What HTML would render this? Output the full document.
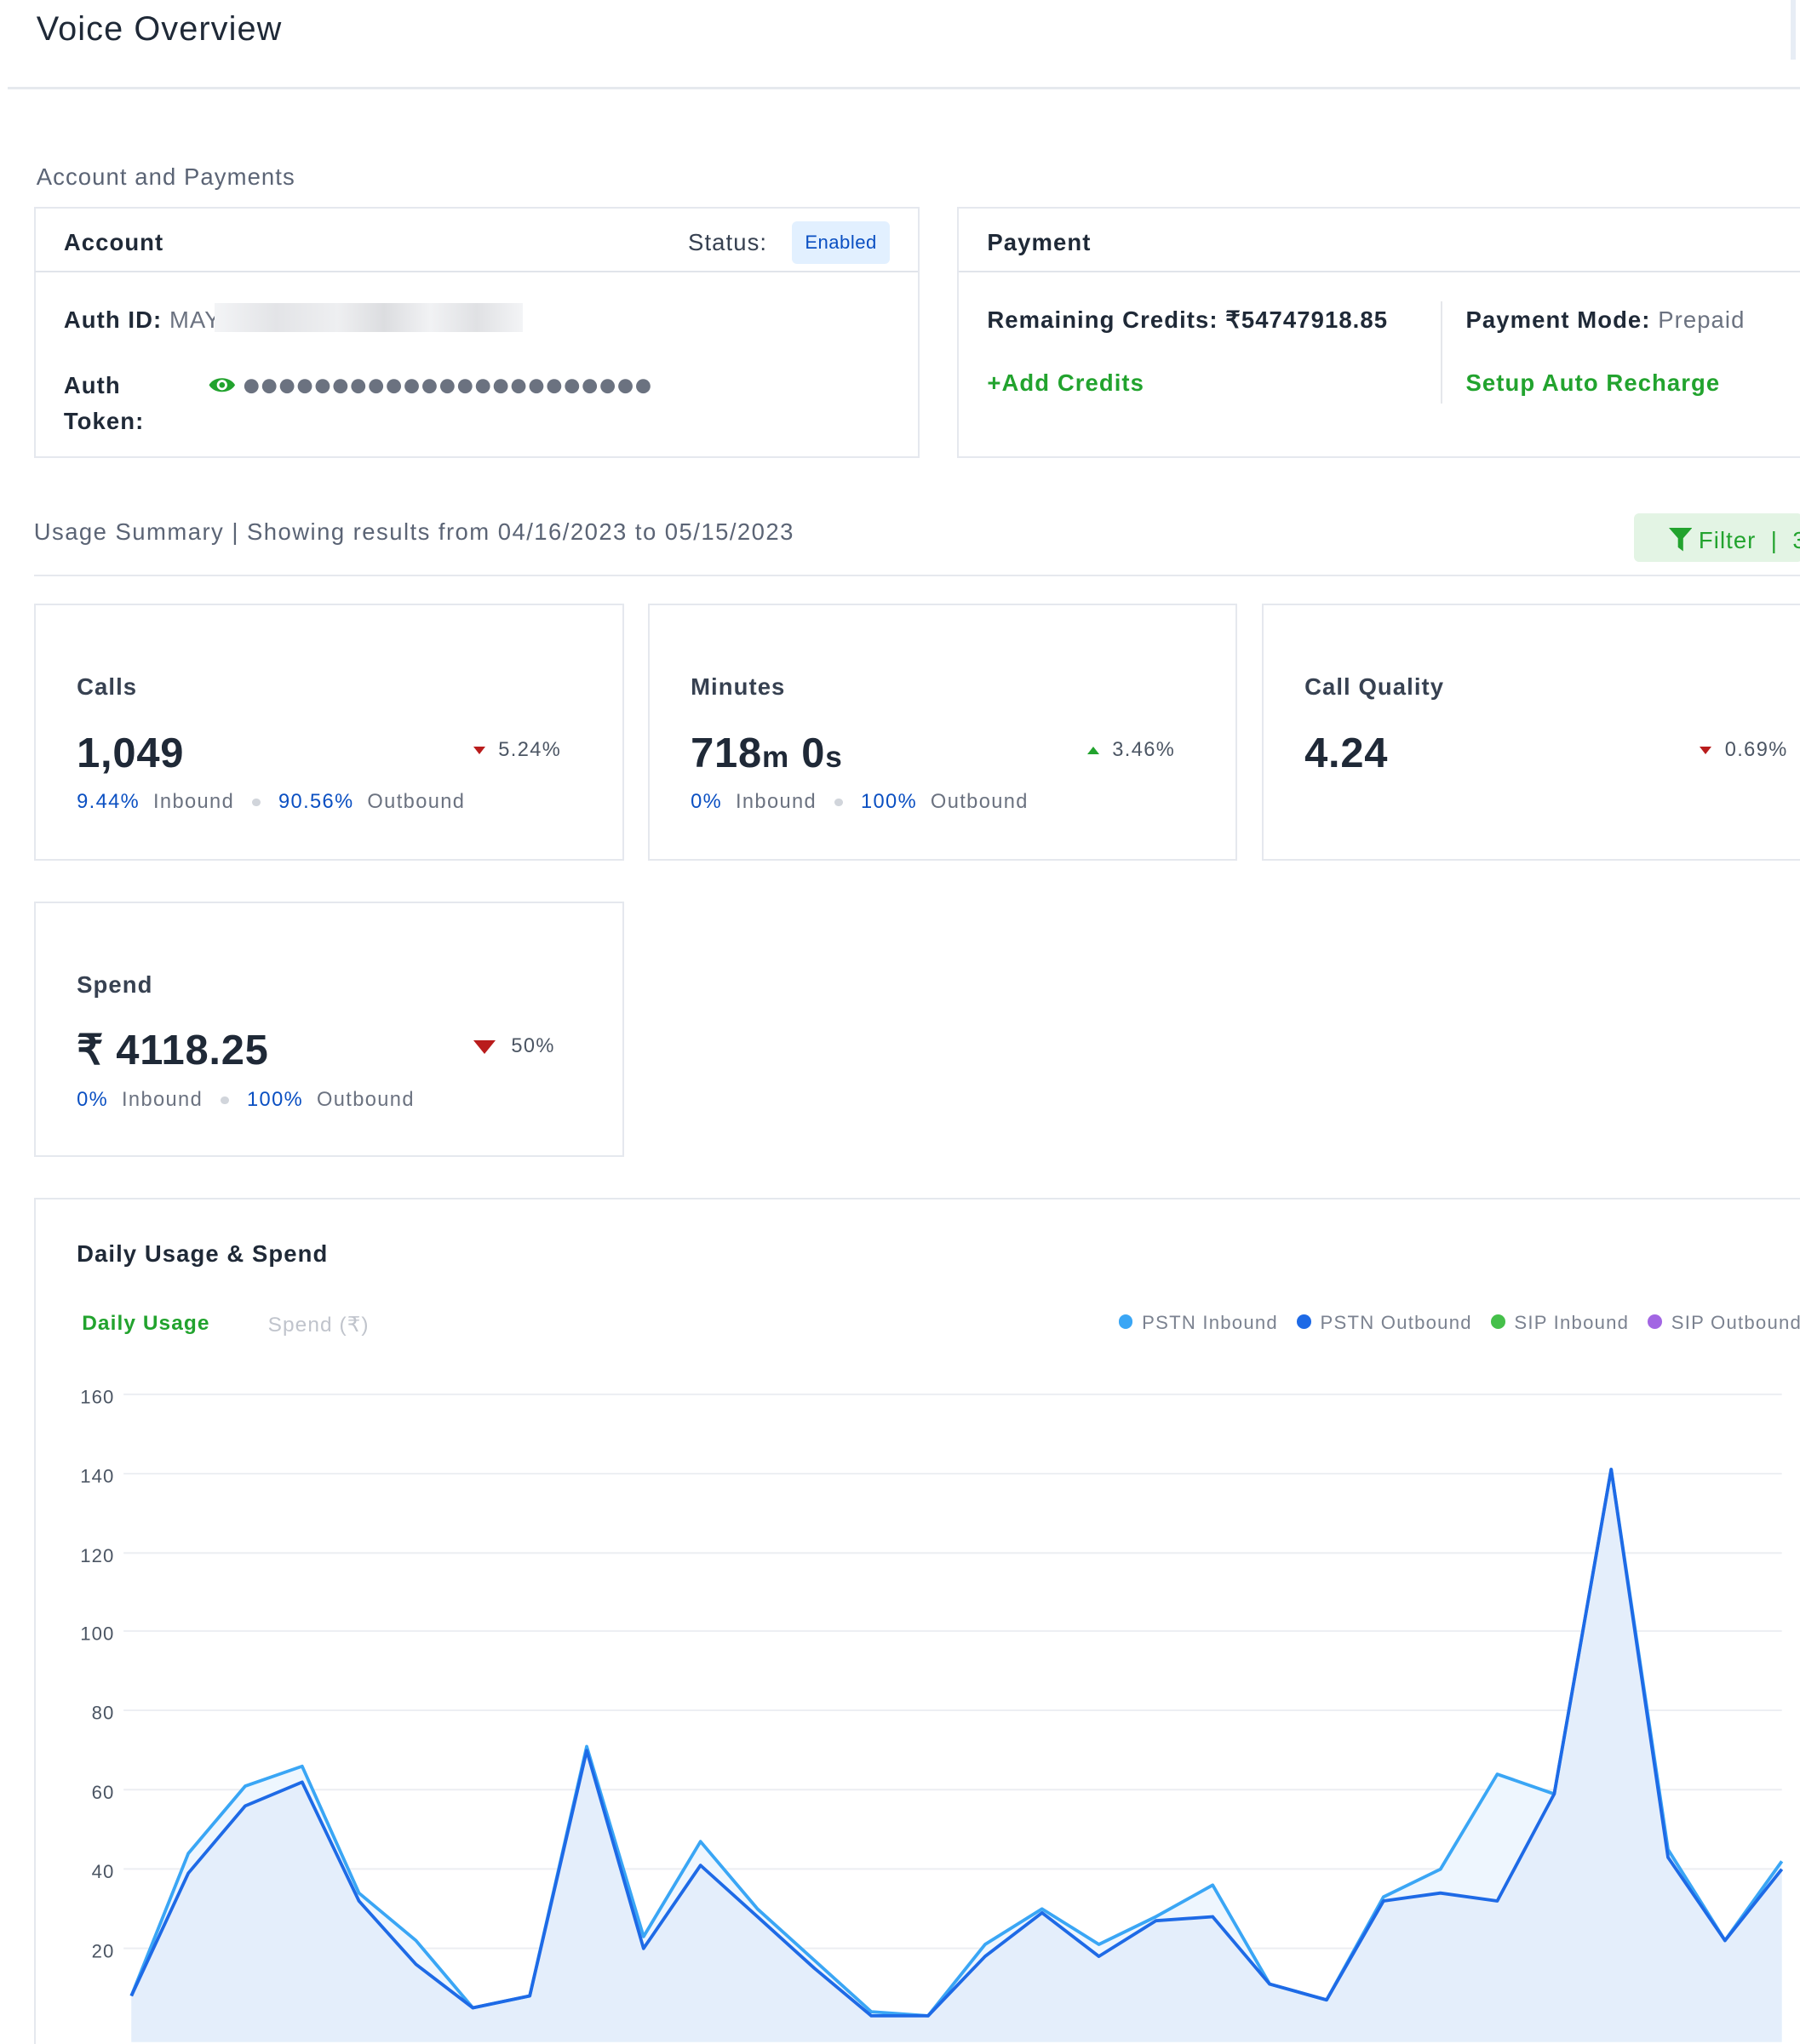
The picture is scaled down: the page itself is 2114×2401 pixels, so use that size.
<!DOCTYPE html>
<html><head><meta charset="utf-8"><style>
html,body{margin:0;padding:0;background:#fff;overflow:hidden}
#w{zoom:1.5275;position:relative;width:1384px;height:1572px;font-family:"Liberation Sans",sans-serif;color:#1f2937;letter-spacing:.7px}
.a{position:absolute;white-space:nowrap}
.box{position:absolute;border:1.5px solid #e5e8ee;background:#fff;box-sizing:border-box}
.g{color:#6b7280}.b{color:#0a4fc2}.gr{color:#22a32e}
.t{font-size:18px;font-weight:600;color:#374151}
.big{font-size:32px;font-weight:700;color:#1f2937;letter-spacing:.5px}
.s{font-size:15.5px;letter-spacing:.9px}
.dot{display:inline-block;width:6px;height:6px;border-radius:50%;background:#d1d5db;vertical-align:middle;margin:0 14px}
.tri{display:inline-block;width:0;height:0;border-left:5px solid transparent;border-right:5px solid transparent;border-top:6px solid #b91c1c;margin-right:10px;vertical-align:middle}
.up{border-top:none;border-bottom:6px solid #22a32e}
</style></head><body><div id="w">
<div class="a" style="left:28px;top:8px;font-size:26px;color:#1f2937">Voice Overview</div>
<div class="a" style="left:1377px;top:0;width:4px;height:46px;background:#e7edf5"></div>
<div class="a" style="left:6px;top:67px;width:1378px;height:1.5px;background:#e6e9ee"></div>
<div class="a g" style="left:28px;top:126px;font-size:18px;color:#5b6475">Account and Payments</div>

<div class="box" style="left:26px;top:159px;width:681px;height:193px"></div>
<div class="a" style="left:27px;top:208px;width:679px;height:1.5px;background:#e1e4ea"></div>
<div class="a t" style="left:49px;top:176px;color:#1f2937">Account</div>
<div class="a t" style="left:529px;top:176px;font-weight:400;color:#374151">Status:</div>
<div class="a" style="left:609px;top:170px;width:75px;height:33px;background:#e2f0ff;border-radius:4px;color:#0a4fc2;font-size:14.5px;line-height:33px;text-align:center;letter-spacing:.3px">Enabled</div>
<div class="a t" style="left:49px;top:236px"><span style="color:#1f2937">Auth ID:</span> <span class="g" style="font-weight:400">MAY</span></div>
<div class="a" style="left:165px;top:233px;width:237px;height:22px;background:linear-gradient(90deg,#f3f4f6,#e3e4e7 20%,#eeeff1 40%,#dcdde0 55%,#f1f2f4 70%,#e0e1e4 85%,#f3f4f6)"></div>
<div class="a t" style="left:49px;top:283px;line-height:27px;color:#1f2937">Auth<br>Token:</div>
<svg class="a" style="left:160px;top:288px" width="22" height="16" viewBox="0 0 22 16"><path d="M1 8C5 1 17 1 21 8C17 15 5 15 1 8Z" fill="#22a32e"/><circle cx="11" cy="8" r="4" fill="#fff"/><circle cx="11" cy="8" r="2.2" fill="#22a32e"/></svg>
<svg class="a" style="left:187px;top:290px" width="320" height="14" viewBox="0 0 320 14"><g fill="#6b7280">
<circle cx="6" cy="7" r="5.5"/><circle cx="19.7" cy="7" r="5.5"/><circle cx="33.4" cy="7" r="5.5"/><circle cx="47.1" cy="7" r="5.5"/><circle cx="60.8" cy="7" r="5.5"/><circle cx="74.5" cy="7" r="5.5"/><circle cx="88.2" cy="7" r="5.5"/><circle cx="101.9" cy="7" r="5.5"/><circle cx="115.6" cy="7" r="5.5"/><circle cx="129.3" cy="7" r="5.5"/><circle cx="143" cy="7" r="5.5"/><circle cx="156.7" cy="7" r="5.5"/><circle cx="170.4" cy="7" r="5.5"/><circle cx="184.1" cy="7" r="5.5"/><circle cx="197.8" cy="7" r="5.5"/><circle cx="211.5" cy="7" r="5.5"/><circle cx="225.2" cy="7" r="5.5"/><circle cx="238.9" cy="7" r="5.5"/><circle cx="252.6" cy="7" r="5.5"/><circle cx="266.3" cy="7" r="5.5"/><circle cx="280" cy="7" r="5.5"/><circle cx="293.7" cy="7" r="5.5"/><circle cx="307.4" cy="7" r="5.5"/></g></svg>

<div class="box" style="left:736px;top:159px;width:660px;height:193px"></div>
<div class="a" style="left:737px;top:208px;width:647px;height:1.5px;background:#e1e4ea"></div>
<div class="a t" style="left:759px;top:176px;color:#1f2937">Payment</div>
<div class="a t" style="left:759px;top:236px;color:#1f2937">Remaining Credits: ₹54747918.85</div>
<div class="a" style="left:1108px;top:232px;width:1px;height:78px;background:#e5e7eb"></div>
<div class="a t" style="left:1127px;top:236px;color:#1f2937">Payment Mode: <span class="g" style="font-weight:400">Prepaid</span></div>
<div class="a t gr" style="left:759px;top:284px;color:#22a32e">+Add Credits</div>
<div class="a t gr" style="left:1127px;top:284px;color:#22a32e">Setup Auto Recharge</div>

<div class="a" style="left:26px;top:399px;font-size:18px;color:#5b6475;letter-spacing:.95px">Usage Summary | Showing results from 04/16/2023 to 05/15/2023</div>
<div class="a" style="left:1256px;top:395px;width:130px;height:37px;background:#e3f4e4;border-radius:4px"></div>
<svg class="a" style="left:1283px;top:406px" width="18" height="18" viewBox="0 0 18 18"><path d="M0 0H18L11 8V18L7 15V8Z" fill="#22a32e"/></svg>
<div class="a gr" style="left:1306px;top:405px;font-size:18px">Filter &nbsp;| &nbsp;3</div>
<div class="a" style="left:26px;top:442px;width:1358px;height:1.5px;background:#e6e9ee"></div>

<div class="box" style="left:26px;top:464px;width:454px;height:198px"></div>
<div class="a t" style="left:59px;top:518px">Calls</div>
<div class="a big" style="left:59px;top:561px">1,049</div>
<div class="a s" style="left:364px;top:568px;color:#4b5563"><span class="tri"></span>5.24%</div>
<div class="a s" style="left:59px;top:608px"><span class="b">9.44%</span>&nbsp; <span class="g">Inbound</span><span class="dot"></span><span class="b">90.56%</span>&nbsp; <span class="g">Outbound</span></div>

<div class="box" style="left:498px;top:464px;width:453px;height:198px"></div>
<div class="a t" style="left:531px;top:518px">Minutes</div>
<div class="a big" style="left:531px;top:561px">718<span style="font-size:23px">m</span> 0<span style="font-size:23px">s</span></div>
<div class="a s" style="left:836px;top:568px;color:#4b5563"><span class="tri up"></span>3.46%</div>
<div class="a s" style="left:531px;top:608px"><span class="b">0%</span>&nbsp; <span class="g">Inbound</span><span class="dot"></span><span class="b">100%</span>&nbsp; <span class="g">Outbound</span></div>

<div class="box" style="left:970px;top:464px;width:430px;height:198px"></div>
<div class="a t" style="left:1003px;top:518px">Call Quality</div>
<div class="a big" style="left:1003px;top:561px">4.24</div>
<div class="a s" style="left:1307px;top:568px;color:#4b5563"><span class="tri"></span>0.69%</div>

<div class="box" style="left:26px;top:693px;width:454px;height:197px"></div>
<div class="a t" style="left:59px;top:747px">Spend</div>
<div class="a big" style="left:59px;top:789px">₹ 4118.25</div>
<div class="a s" style="left:364px;top:796px;color:#4b5563"><span class="tri" style="border-left-width:9px;border-right-width:9px;border-top-width:11px;margin-right:12px"></span>50%</div>
<div class="a s" style="left:59px;top:837px"><span class="b">0%</span>&nbsp; <span class="g">Inbound</span><span class="dot"></span><span class="b">100%</span>&nbsp; <span class="g">Outbound</span></div>

<div class="box" style="left:26px;top:921px;width:1380px;height:700px"></div>
<div class="a t" style="left:59px;top:954px;color:#1f2937">Daily Usage &amp; Spend</div>
<div class="a" style="left:63px;top:1009px;font-size:16px;font-weight:600;color:#22a32e">Daily Usage</div>
<div class="a" style="left:206px;top:1009px;font-size:16px;color:#c0c4cc">Spend (₹)</div>
<div class="a s" style="left:860px;top:1009px;font-size:14.5px;color:#7b8290;letter-spacing:.8px">
<span style="display:inline-block;width:11px;height:11px;border-radius:50%;background:#3aa6f5;margin-right:7px"></span>PSTN Inbound &nbsp;
<span style="display:inline-block;width:11px;height:11px;border-radius:50%;background:#1e6ae6;margin-right:7px"></span>PSTN Outbound &nbsp;
<span style="display:inline-block;width:11px;height:11px;border-radius:50%;background:#45c04a;margin-right:7px"></span>SIP Inbound &nbsp;
<span style="display:inline-block;width:11px;height:11px;border-radius:50%;background:#a266e3;margin-right:7px"></span>SIP Outbound</div>

<svg class="a" style="left:0;top:1040px" width="1384" height="532" viewBox="0 1040 1384 532">
<g font-family="Liberation Sans,sans-serif" font-size="14.5" fill="#4b5563" text-anchor="end">
<text x="88" y="1079">160</text><text x="88" y="1140">140</text><text x="88" y="1201">120</text><text x="88" y="1261">100</text><text x="88" y="1322">80</text><text x="88" y="1383">60</text><text x="88" y="1444">40</text><text x="88" y="1505">20</text>
</g>
<g stroke="#eceef2" stroke-width="1.3">
<line x1="95" x2="1370" y1="1072" y2="1072"/><line x1="95" x2="1370" y1="1133" y2="1133"/><line x1="95" x2="1370" y1="1194" y2="1194"/><line x1="95" x2="1370" y1="1254" y2="1254"/><line x1="95" x2="1370" y1="1315" y2="1315"/><line x1="95" x2="1370" y1="1376" y2="1376"/><line x1="95" x2="1370" y1="1437" y2="1437"/><line x1="95" x2="1370" y1="1498" y2="1498"/>
</g>
<polygon fill="#eef6fe" points="101,1570 101,1534.6 144.8,1425 188.5,1373.3 232.3,1358 276,1455.5 319.8,1492 363.6,1543.8 407.3,1534.6 451.1,1342.8 494.8,1489 538.6,1415.9 582.4,1467.7 626.1,1507.2 669.9,1546.8 713.6,1549.9 757.4,1495 801.2,1467.7 844.9,1495 888.7,1473.7 932.4,1449.4 976.2,1525.5 1020,1537.7 1063.7,1458.5 1107.5,1437.2 1151.2,1364.1 1195,1379.3 1238.8,1129.7 1282.5,1422 1326.3,1492 1370,1431.1 1370,1570"/>
<polygon fill="#e4eefb" points="101,1570 101,1534.6 144.8,1440.2 188.5,1388.5 232.3,1370.2 276,1461.6 319.8,1510.3 363.6,1543.8 407.3,1534.6 451.1,1345.9 494.8,1498.1 538.6,1434.2 582.4,1473.7 626.1,1513.3 669.9,1549.9 713.6,1549.9 757.4,1504.2 801.2,1470.7 844.9,1504.2 888.7,1476.8 932.4,1473.7 976.2,1525.5 1020,1537.7 1063.7,1461.6 1107.5,1455.5 1151.2,1461.6 1195,1379.3 1238.8,1129.7 1282.5,1428.1 1326.3,1492 1370,1437.2 1370,1570"/>
<polyline fill="none" stroke="#3aa6f5" stroke-width="2.5" stroke-linejoin="round" points="101,1534.6 144.8,1425 188.5,1373.3 232.3,1358 276,1455.5 319.8,1492 363.6,1543.8 407.3,1534.6 451.1,1342.8 494.8,1489 538.6,1415.9 582.4,1467.7 626.1,1507.2 669.9,1546.8 713.6,1549.9 757.4,1495 801.2,1467.7 844.9,1495 888.7,1473.7 932.4,1449.4 976.2,1525.5 1020,1537.7 1063.7,1458.5 1107.5,1437.2 1151.2,1364.1 1195,1379.3 1238.8,1129.7 1282.5,1422 1326.3,1492 1370,1431.1"/>
<polyline fill="none" stroke="#1e6ae6" stroke-width="2.5" stroke-linejoin="round" points="101,1534.6 144.8,1440.2 188.5,1388.5 232.3,1370.2 276,1461.6 319.8,1510.3 363.6,1543.8 407.3,1534.6 451.1,1345.9 494.8,1498.1 538.6,1434.2 582.4,1473.7 626.1,1513.3 669.9,1549.9 713.6,1549.9 757.4,1504.2 801.2,1470.7 844.9,1504.2 888.7,1476.8 932.4,1473.7 976.2,1525.5 1020,1537.7 1063.7,1461.6 1107.5,1455.5 1151.2,1461.6 1195,1379.3 1238.8,1129.7 1282.5,1428.1 1326.3,1492 1370,1437.2"/>
</svg>
</div></body></html>
